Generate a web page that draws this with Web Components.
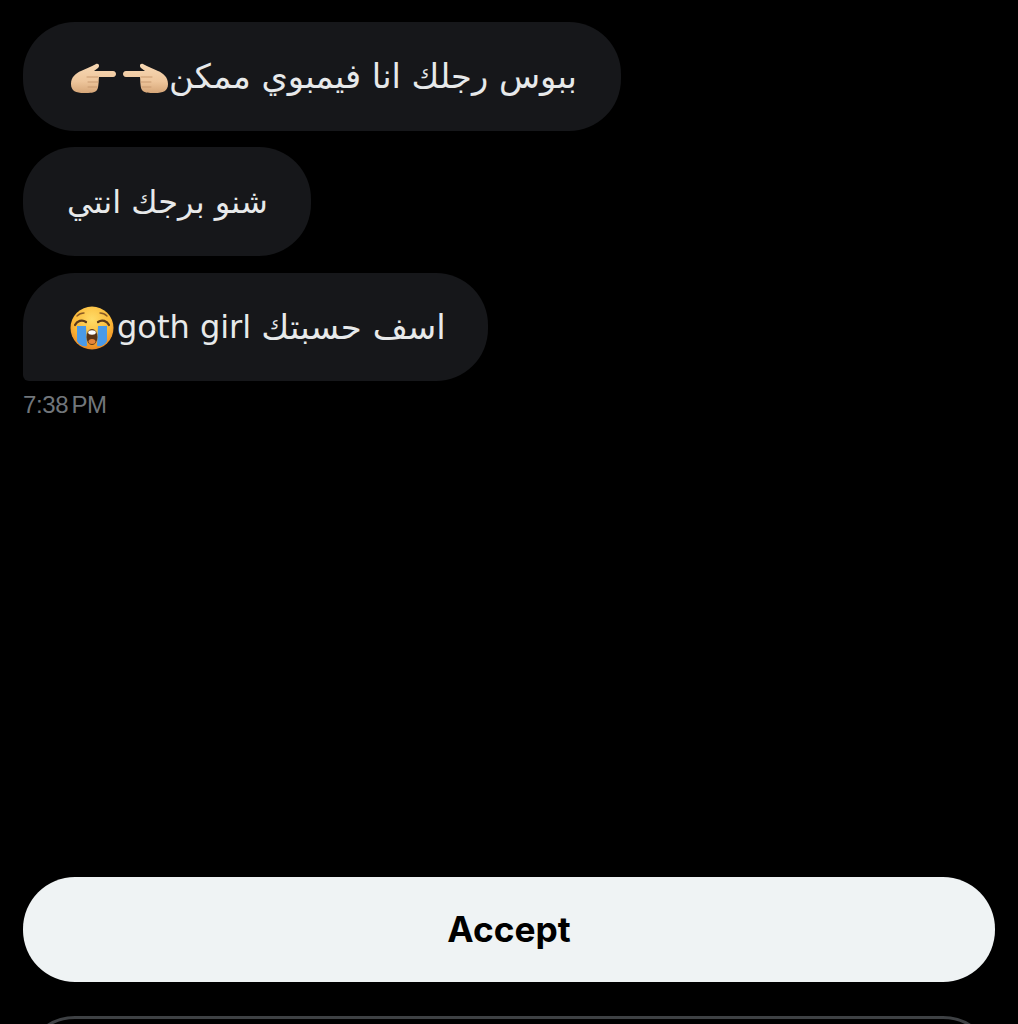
<!DOCTYPE html>
<html lang="ar">
<head>
<meta charset="utf-8">
<title>Message request</title>
<style>
  html, body { margin: 0; padding: 0; background: #000; }
  body { height: 1024px; overflow: hidden; font-family: "DejaVu Sans", sans-serif; }
</style>
</head>
<body>
<template id="hand-icon">
  <style>
    :host { display: inline-flex; width: 46px; height: 36px; margin-top: 3px; vertical-align: middle; }
    svg { width: 100%; height: 100%; display: block; }
    :host([flip]) svg { transform: scaleX(-1); }
  </style>
  <svg viewBox="0 0 46 36" aria-hidden="true">
    <defs>
      <linearGradient id="skin" x1="0" y1="0" x2="0" y2="1">
        <stop offset="0" stop-color="#f7d8b4"/>
        <stop offset=".6" stop-color="#eec69c"/>
        <stop offset="1" stop-color="#d6a678"/>
      </linearGradient>
    </defs>
    <path fill="url(#skin)" d="M1 24C1 17 6 13 11 11 16 9 22 6 26 4 29 3 30 6 28 8L24 11H43C47 11 47 17 43 17H29C28.500 20 29 27 27 30 25 33 20 33 14 33 6 33 1 31 1 24Z"/>
    <path fill="none" stroke="#c99a70" stroke-width="1" stroke-linecap="round" d="M28 17H17M28 22H18M27 27H18"/>
  </svg>
</template>

<template id="cry-icon">
  <style>
    :host { display: inline-flex; width: 44px; height: 44px; margin: 2px 3px 0 0; vertical-align: middle; }
    svg { width: 100%; height: 100%; display: block; }
  </style>
  <svg viewBox="0 0 44 44" aria-hidden="true">
    <defs>
      <radialGradient id="face" cx=".5" cy=".3" r=".72">
        <stop offset="0" stop-color="#ffdc68"/>
        <stop offset=".6" stop-color="#fbb938"/>
        <stop offset="1" stop-color="#ea8420"/>
      </radialGradient>
    </defs>
    <circle cx="22" cy="22" r="21.500" fill="url(#face)"/>
    <path fill="#4a9ae8" d="M7 20h9l1 20c-4 1-8-1-10-5zM28 20h9v15c-2 4-6 6-10 5z"/>
    <path fill="none" stroke="#5c3a1a" stroke-width="2.200" stroke-linecap="round" d="M5 19c2-4 7-6 11-3M39 19c-2-4-7-6-11-3"/>
    <path fill="none" stroke="#8a5a24" stroke-width="1.400" stroke-linecap="round" d="M7 10c2-2 5-3 7-3M37 10c-2-2-5-3-7-3"/>
    <ellipse cx="22" cy="31" rx="5.500" ry="8" fill="#5a3416"/>
    <ellipse cx="22" cy="26.500" rx="3.800" ry="2.200" fill="#fff"/>
    <ellipse cx="22" cy="35.500" rx="3.500" ry="2.500" fill="#e8863a"/>
  </svg>
</template>

<template id="chat-bubble">
  <style>
    :host {
      display: flex;
      align-items: center;
      align-self: flex-start;
      box-sizing: border-box;
      height: 109px;
      padding: 0 44px 0 47px;
      border-radius: 52px;
      background: #16171a;
      color: #e7e9ea;
      font-size: 32px;
      line-height: 40px;
      white-space: nowrap;
    }
    :host([last]) { border-bottom-left-radius: 6px; margin-top: 1px; height: 108px; padding-right: 42px; }
    .text { display: inline-flex; align-items: center; direction: rtl; }
  </style>
  <span class="text"><slot></slot></span>
</template>

<template id="action-button">
  <style>
    :host {
      display: flex;
      align-items: center;
      justify-content: center;
      box-sizing: border-box;
      height: 105px;
      flex: none;
      border-radius: 52px;
      background: #eff3f4;
      color: #000;
      font-family: Inter, sans-serif;
      font-weight: 700;
      font-size: 35.300px;
    }
    :host([outline]) {
      background: transparent;
      border: 3px solid #3e4144;
      color: #eff3f4;
    }
  </style>
  <slot></slot>
</template>

<template id="request-screen">
  <style>
    :host {
      display: flex;
      flex-direction: column;
      box-sizing: border-box;
      height: 1024px;
      padding: 22px 23px 0;
    }
    .thread { display: flex; flex-direction: column; gap: 16px; }
    .time {
      margin-top: 10px;
      color: #71767b;
      font-family: "Liberation Sans", sans-serif;
      font-size: 24px;
      line-height: 28px;
      letter-spacing: -.4px;
      word-spacing: -3px;
    }
    .actions {
      margin-top: auto;
      display: flex;
      flex-direction: column;
      gap: 34px;
      height: 147px;
      overflow: hidden;
    }
  </style>
  <div class="thread"><slot name="thread"></slot></div>
  <div class="time"><slot name="time"></slot></div>
  <div class="actions"><slot name="actions"></slot></div>
</template>

<request-screen>
  <chat-bubble slot="thread" style="font-size:33.700px">ببوس رجلك انا فيمبوي ممكن<hand-icon flip></hand-icon><span style="width:7px"></span><hand-icon></hand-icon></chat-bubble>
  <chat-bubble slot="thread" style="padding:0 43px 0 44px">شنو برجك انتي</chat-bubble>
  <chat-bubble slot="thread" last><span style="font-size:34px">اسف حسبتك</span>&nbsp;goth girl<cry-icon></cry-icon></chat-bubble>
  <span slot="time">7:38 PM</span>
  <action-button slot="actions">Accept</action-button>
  <action-button slot="actions" outline></action-button>
</request-screen>

<script>
  // every element clones its own template into an open shadow root
  class TemplateElement extends HTMLElement {
    constructor() {
      super();
      this.attachShadow({ mode: 'open' });
      const tpl = document.getElementById(this.constructor.templateId);
      this.shadowRoot.appendChild(tpl.content.cloneNode(true));
    }
  }

  class HandIcon extends TemplateElement { static get templateId() { return 'hand-icon'; } }
  class CryIcon extends TemplateElement { static get templateId() { return 'cry-icon'; } }
  class ChatBubble extends TemplateElement { static get templateId() { return 'chat-bubble'; } }
  class ActionButton extends TemplateElement { static get templateId() { return 'action-button'; } }
  class RequestScreen extends TemplateElement { static get templateId() { return 'request-screen'; } }

  customElements.define('hand-icon', HandIcon);
  customElements.define('cry-icon', CryIcon);
  customElements.define('chat-bubble', ChatBubble);
  customElements.define('action-button', ActionButton);
  customElements.define('request-screen', RequestScreen);
</script>
</body>
</html>
